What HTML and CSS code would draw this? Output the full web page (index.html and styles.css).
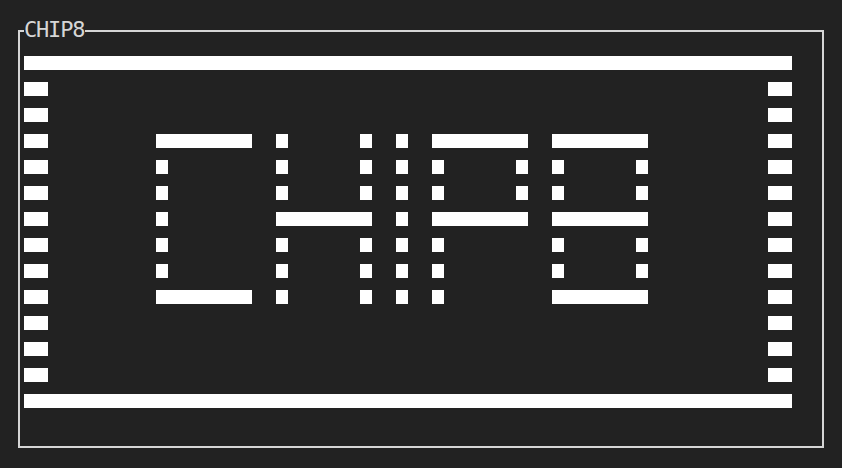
FILE: index.html
```html
<!DOCTYPE html>
<html>
<head>
<meta charset="utf-8">
<link rel="stylesheet" href="styles.css">
</head>
<body>
<div class="frame">
  <span class="title">CHIP8</span>
  <svg class="display" width="768" height="352" viewBox="0 0 64 352" preserveAspectRatio="none" shape-rendering="crispEdges">
    <g fill="#ffffff">
      <!-- top and bottom bars -->
      <rect x="0" y="0" width="64" height="14"/>
      <rect x="0" y="338" width="64" height="14"/>
      <!-- side dots -->
      <rect x="0" y="26" width="2" height="14"/><rect x="62" y="26" width="2" height="14"/>
      <rect x="0" y="52" width="2" height="14"/><rect x="62" y="52" width="2" height="14"/>
      <rect x="0" y="78" width="2" height="14"/><rect x="62" y="78" width="2" height="14"/>
      <rect x="0" y="104" width="2" height="14"/><rect x="62" y="104" width="2" height="14"/>
      <rect x="0" y="130" width="2" height="14"/><rect x="62" y="130" width="2" height="14"/>
      <rect x="0" y="156" width="2" height="14"/><rect x="62" y="156" width="2" height="14"/>
      <rect x="0" y="182" width="2" height="14"/><rect x="62" y="182" width="2" height="14"/>
      <rect x="0" y="208" width="2" height="14"/><rect x="62" y="208" width="2" height="14"/>
      <rect x="0" y="234" width="2" height="14"/><rect x="62" y="234" width="2" height="14"/>
      <rect x="0" y="260" width="2" height="14"/><rect x="62" y="260" width="2" height="14"/>
      <rect x="0" y="286" width="2" height="14"/><rect x="62" y="286" width="2" height="14"/>
      <rect x="0" y="312" width="2" height="14"/><rect x="62" y="312" width="2" height="14"/>
      <!-- C -->
      <rect x="11" y="78" width="8" height="14"/>
      <rect x="11" y="104" width="1" height="14"/>
      <rect x="11" y="130" width="1" height="14"/>
      <rect x="11" y="156" width="1" height="14"/>
      <rect x="11" y="182" width="1" height="14"/>
      <rect x="11" y="208" width="1" height="14"/>
      <rect x="11" y="234" width="8" height="14"/>
      <!-- H -->
      <rect x="21" y="78" width="1" height="14"/><rect x="28" y="78" width="1" height="14"/>
      <rect x="21" y="104" width="1" height="14"/><rect x="28" y="104" width="1" height="14"/>
      <rect x="21" y="130" width="1" height="14"/><rect x="28" y="130" width="1" height="14"/>
      <rect x="21" y="156" width="8" height="14"/>
      <rect x="21" y="182" width="1" height="14"/><rect x="28" y="182" width="1" height="14"/>
      <rect x="21" y="208" width="1" height="14"/><rect x="28" y="208" width="1" height="14"/>
      <rect x="21" y="234" width="1" height="14"/><rect x="28" y="234" width="1" height="14"/>
      <!-- I -->
      <rect x="31" y="78" width="1" height="14"/>
      <rect x="31" y="104" width="1" height="14"/>
      <rect x="31" y="130" width="1" height="14"/>
      <rect x="31" y="156" width="1" height="14"/>
      <rect x="31" y="182" width="1" height="14"/>
      <rect x="31" y="208" width="1" height="14"/>
      <rect x="31" y="234" width="1" height="14"/>
      <!-- P -->
      <rect x="34" y="78" width="8" height="14"/>
      <rect x="34" y="104" width="1" height="14"/><rect x="41" y="104" width="1" height="14"/>
      <rect x="34" y="130" width="1" height="14"/><rect x="41" y="130" width="1" height="14"/>
      <rect x="34" y="156" width="8" height="14"/>
      <rect x="34" y="182" width="1" height="14"/>
      <rect x="34" y="208" width="1" height="14"/>
      <rect x="34" y="234" width="1" height="14"/>
      <!-- 8 -->
      <rect x="44" y="78" width="8" height="14"/>
      <rect x="44" y="104" width="1" height="14"/><rect x="51" y="104" width="1" height="14"/>
      <rect x="44" y="130" width="1" height="14"/><rect x="51" y="130" width="1" height="14"/>
      <rect x="44" y="156" width="8" height="14"/>
      <rect x="44" y="182" width="1" height="14"/><rect x="51" y="182" width="1" height="14"/>
      <rect x="44" y="208" width="1" height="14"/><rect x="51" y="208" width="1" height="14"/>
      <rect x="44" y="234" width="8" height="14"/>
    </g>
  </svg>
</div>
</body>
</html>
```
FILE: styles.css
```css
html, body {
  margin: 0;
  padding: 0;
  background: #222222;
}
body {
  width: 842px;
  height: 468px;
  overflow: hidden;
  padding-top: 30px;
  box-sizing: border-box;
}
.frame {
  position: relative;
  margin-left: 18px;
  width: 806px;
  height: 418px;
  box-sizing: border-box;
  border: 2px solid #d6d6d6;
  padding: 24px 0 0 4px;
}
.title {
  position: absolute;
  left: 4px;
  top: -13px;
  padding: 0 1px 0 0;
  background: #222222;
  color: #d6d6d6;
  font-family: "DejaVu Sans Mono", "Liberation Mono", monospace;
  font-size: 22px;
  letter-spacing: -1.2px;
  line-height: 22px;
  height: 22px;
}
.display {
  display: block;
}
```
